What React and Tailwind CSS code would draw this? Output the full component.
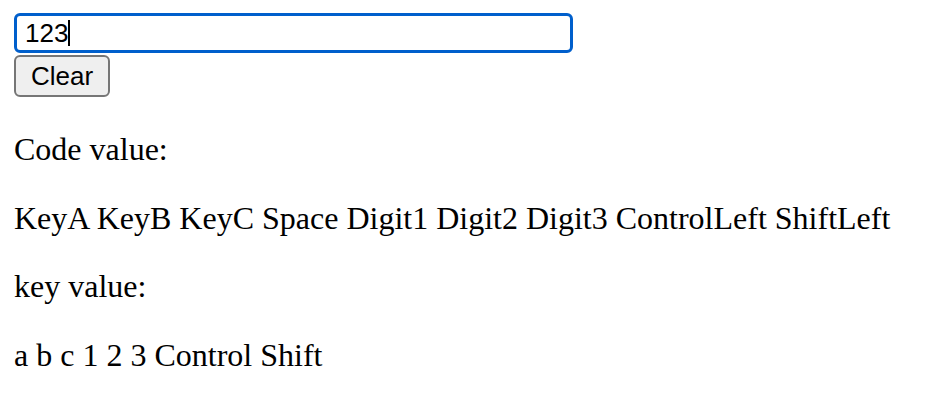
export default function App() {
    const codes = ['KeyA', 'KeyB', 'KeyC', 'Space', 'Digit1', 'Digit2', 'Digit3', 'ControlLeft', 'ShiftLeft'];
    const keys = ['a', 'b', 'c', '1', '2', '3', 'Control', 'Shift'];

    return (
        <div className="min-h-screen bg-white pt-[13px] pl-[14px] text-black">
            {/* focused text field */}
            <div className="w-[559px] h-[40px] flex items-center pl-[8px] border-[3px] border-[#005fcc] rounded-[6px] bg-white font-['Liberation_Sans',Arial,sans-serif] text-[26px]">
                <span>123</span>
                <span className="w-[2px] h-[26px] bg-black"></span>
            </div>

            <button className="mt-[2px] w-[96px] h-[42px] flex items-center justify-center bg-[#efefef] border-2 border-[#767676] rounded-[6px] font-['Liberation_Sans',Arial,sans-serif] text-[26px] text-black">
                Clear
            </button>

            <div className="font-['Liberation_Serif','Times_New_Roman',serif] text-[32px] leading-[36.5px]">
                <p className="mt-[34px]">Code value:</p>
                <p className="mt-[32px]">{codes.join(' ')}</p>
                <p className="mt-[32px]">key value:</p>
                <p className="mt-[32px]">{keys.join(' ')}</p>
            </div>
        </div>
    );
}
